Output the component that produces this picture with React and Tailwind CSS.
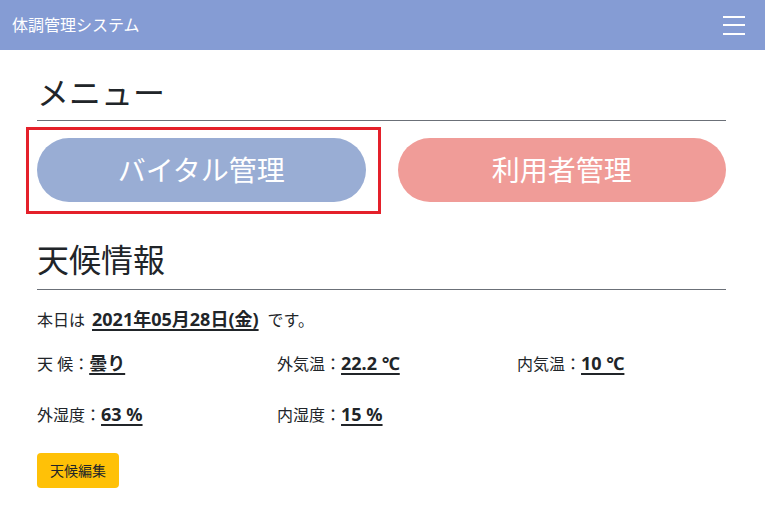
import React from "react";

const font = "font-['Noto_Sans','Noto_Sans_CJK_JP',sans-serif]";

const Value = ({ children }) => (
  <span className="text-[18px] font-bold underline underline-offset-[3px] decoration-[1.5px]">
    {children}
  </span>
);

const Field = ({ label, value }) => (
  <div className="text-[16px] leading-6">
    <span>{label}：</span>
    <Value>{value}</Value>
  </div>
);

const App = () => {
  return (
    <div className={`${font} min-h-[512px] bg-white text-[#212529]`}>
      {/* Navbar */}
      <nav className="h-[50px] bg-[#859cd4] flex items-center justify-between pl-3 pr-5">
        <span className="text-white text-[16px]">体調管理システム</span>
        <button className="flex flex-col gap-[6.5px] w-[22px]">
          <span className="block h-[2px] w-full bg-white" />
          <span className="block h-[2px] w-full bg-white" />
          <span className="block h-[2px] w-full bg-white" />
        </button>
      </nav>

      <main className="pl-[37px] pr-[39px]">
        {/* Menu */}
        <h2 className="mt-[24px] text-[32px] leading-[38px] font-normal">メニュー</h2>
        <hr className="mt-[8px] border-t border-[#6b7078]" />

        <div className="mt-[17px] grid grid-cols-2 gap-8">
          <div className="relative">
            <button className="w-full h-16 rounded-full bg-[#99add4] text-white text-[28px]">
              バイタル管理
            </button>
            <span className="absolute -left-[11px] -right-[15px] -top-[11px] -bottom-[12px] border-[3px] border-[#e4202a] pointer-events-none" />
          </div>
          <button className="w-full h-16 rounded-full bg-[#f09c98] text-white text-[28px]">
            利用者管理
          </button>
        </div>

        {/* Weather */}
        <h2 className="mt-[39px] text-[32px] leading-[38px] font-normal">天候情報</h2>
        <hr className="mt-[10px] border-t border-[#6b7078]" />

        <p className="mt-[17px] text-[16px] leading-6">
          本日は
          <span className="ml-[7px] mr-[9px]">
            <Value>2021年05月28日(金)</Value>
          </span>
          です。
        </p>

        <div className="mt-[19px] grid grid-cols-[240px_240px_1fr] gap-y-[26px]">
          <Field label="天 候" value="曇り" />
          <Field label="外気温" value="22.2 ℃" />
          <Field label="内気温" value="10 ℃" />
          <Field label="外湿度" value="63 %" />
          <Field label="内湿度" value="15 %" />
        </div>

        <button className="mt-[26px] h-[35px] px-[13px] rounded bg-[#ffc107] text-[14px] text-[#212529]">
          天候編集
        </button>
      </main>
    </div>
  );
};

export default App;
